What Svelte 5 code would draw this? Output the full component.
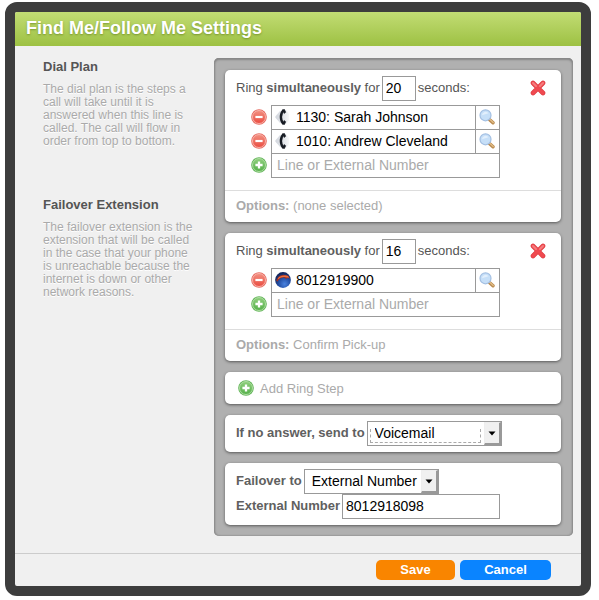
<script lang="ts">
	type Kind = 'line' | 'external';

	interface Target {
		id: number;
		kind: Kind;
		label: string;
	}

	interface Step {
		id: number;
		seconds: string;
		targets: Target[];
		draft: string;
		options: string;
	}

	let nextId = 10;

	let steps = $state<Step[]>([
		{
			id: 1,
			seconds: '20',
			targets: [
				{ id: 1, kind: 'line', label: '1130: Sarah Johnson' },
				{ id: 2, kind: 'line', label: '1010: Andrew Cleveland' }
			],
			draft: '',
			options: '(none selected)'
		},
		{
			id: 2,
			seconds: '16',
			targets: [{ id: 3, kind: 'external', label: '8012919900' }],
			draft: '',
			options: 'Confirm Pick-up'
		}
	]);

	let noAnswer = $state('Voicemail');
	let failover = $state('External Number');
	let externalNumber = $state('8012918098');

	function addTarget(step: Step) {
		if (!step.draft) return;
		step.targets.push({ id: nextId++, kind: 'external', label: step.draft });
		step.draft = '';
	}

	function removeTarget(step: Step, id: number) {
		step.targets = step.targets.filter((t) => t.id !== id);
	}

	function addStep() {
		steps.push({ id: nextId++, seconds: '20', targets: [], draft: '', options: '(none selected)' });
	}

	function removeStep(id: number) {
		steps = steps.filter((s) => s.id !== id);
	}
</script>

{#snippet badge(kind: 'add' | 'remove')}
	<svg class="icon" viewBox="0 0 16 16" aria-hidden="true">
		<defs>
			<linearGradient id="grad-add" x1="0" y1="0" x2="0" y2="1">
				<stop offset="0" stop-color="#90cf7e" />
				<stop offset="1" stop-color="#55b04a" />
			</linearGradient>
			<linearGradient id="grad-remove" x1="0" y1="0" x2="0" y2="1">
				<stop offset="0" stop-color="#f29182" />
				<stop offset="1" stop-color="#ea4b40" />
			</linearGradient>
		</defs>
		<circle cx="8" cy="8" r="7.8" fill={kind === 'add' ? '#62b558' : '#e66a60'} />
		<circle cx="8" cy="8" r="6.5" fill="url(#grad-{kind})" stroke={kind === 'add' ? '#b5e0a9' : '#f9b9b0'} stroke-width="0.9" />
		{#if kind === 'add'}
			<path d="M8 4.4v7.2M4.4 8h7.2" stroke="#fff" stroke-width="2.3" />
		{:else}
			<path d="M4.4 8h7.2" stroke="#fff" stroke-width="2.2" />
		{/if}
	</svg>
{/snippet}

{#snippet targetIcon(kind: Kind)}
	<svg class="icon" viewBox="0 0 16 16" aria-hidden="true">
		{#if kind === 'line'}
			<defs>
				<linearGradient id="grad-phone" x1="0" y1="0" x2="1" y2="0">
					<stop offset="0" stop-color="#d3d7de" />
					<stop offset="0.5" stop-color="#dfe2e7" />
					<stop offset="1" stop-color="#f6f7f8" />
				</linearGradient>
			</defs>
			<path d="M5 2L0.5 7.2q-0.4 0.800 0 1.600L5 14l6.500 0.500 2.500-3.500V5l-2.500-3.500z" fill="url(#grad-phone)" />
			<path d="M8.600 1C5 4.600 5 11.400 8.600 15" fill="none" stroke="#181c24" stroke-width="2.400" />
			<path
				d="M7.600 0.900L9.400 0.300l1.400 2.900-1.700 1.400zM7.600 15.100l1.800 0.600 1.400-2.900-1.700-1.400z"
				fill="#181c24"
				stroke="#181c24"
				stroke-width="0.500"
				stroke-linejoin="round"
			/>
		{:else}
			<defs>
				<radialGradient id="grad-globe" cx="0.6" cy="0.75" r="0.7">
					<stop offset="0" stop-color="#4a83e0" />
					<stop offset="0.55" stop-color="#234ea3" />
					<stop offset="1" stop-color="#13265c" />
				</radialGradient>
			</defs>
			<circle cx="8" cy="8" r="7.9" fill="url(#grad-globe)" />
			<path d="M1.300 8.800C2 5.500 5 3 8.500 2.800l5 0.900 1.300 3-2.600-0.900-1 1.500-1.900-1.700C6.500 5.400 4 6.500 2.600 9.600z" fill="#9c3026" />
			<path d="M3 6.300C5 3.900 8.500 3 12.800 4l1.200 1.700-3.200-0.500C8 4.700 5.500 5.200 3 7.300z" fill="#f0703c" />
		{/if}
	</svg>
{/snippet}

{#snippet arrow()}
	<span class="arrow" aria-hidden="true">
		<svg viewBox="0 0 8 5"><path d="M0.500 0.500h7L4 4.500z" fill="#000" /></svg>
	</span>
{/snippet}

<div class="dialog">
	<header>
		<h1>Find Me/Follow Me Settings</h1>
	</header>

	<div class="content">
		<aside>
			<section>
				<h2>Dial Plan</h2>
				<p>
					The dial plan is the steps a call will take until it is answered when this line is
					called. The call will flow in order from top to bottom.
				</p>
			</section>
			<section>
				<h2>Failover Extension</h2>
				<p>
					The failover extension is the extension that will be called in the case that your phone
					is unreachable because the internet is down or other network reasons.
				</p>
			</section>
		</aside>

		<main>
			{#each steps as step (step.id)}
				<div class="card step">
					<div class="row">
						<label for="seconds-{step.id}">Ring <b>simultaneously</b> for</label>
						<input id="seconds-{step.id}" class="field seconds" bind:value={step.seconds} />
						<span>seconds:</span>
						<button class="plain close" aria-label="Remove ring step" onclick={() => removeStep(step.id)}>
							<svg class="icon" viewBox="0 0 16 16" aria-hidden="true">
								<path d="M3 3l10 10M13 3L3 13" stroke="#dc3c42" stroke-width="4.6" stroke-linecap="round" />
								<path d="M3 3l10 10M13 3L3 13" stroke="#f04a50" stroke-width="3.4" stroke-linecap="round" />
								<path d="M3 3l3 3M13 3l-3 3" stroke="#f67c7e" stroke-width="2" stroke-linecap="round" />
							</svg>
						</button>
					</div>

					<ul>
						{#each step.targets as target (target.id)}
							<li>
								<button class="plain" aria-label="Remove {target.label}" onclick={() => removeTarget(step, target.id)}>
									{@render badge('remove')}
								</button>
								<div class="box">
									<span class="kind">{@render targetIcon(target.kind)}</span>
									<input aria-label="Line or number" bind:value={target.label} />
									<button class="plain search" aria-label="Find a line">
										<svg class="icon" viewBox="0 0 16 16" aria-hidden="true">
											<path d="M10.4 10.4l3.6 3.4" stroke="#b98a50" stroke-width="3.4" stroke-linecap="round" />
											<path d="M10.8 10.2l3.4 3.2" stroke="#e2bd85" stroke-width="1.4" stroke-linecap="round" />
											<circle cx="6.5" cy="6.3" r="5.5" fill="#c6dff8" stroke="#a3bfe2" stroke-width="1.2" />
											<path d="M3 6.2a3.6 3.6 0 0 1 6.500-2z" fill="#e2effc" />
										</svg>
									</button>
								</div>
							</li>
						{/each}
						<li>
							<button class="plain" aria-label="Add number" onclick={() => addTarget(step)}>
								{@render badge('add')}
							</button>
							<div class="box">
								<input
									class="draft"
									aria-label="Line or External Number"
									placeholder="Line or External Number"
									bind:value={step.draft}
								/>
							</div>
						</li>
					</ul>

					<div class="options"><b>Options:</b> {step.options}</div>
				</div>
			{/each}

			<div class="card">
				<button class="plain add-step" onclick={addStep}>
					{@render badge('add')}
					Add Ring Step
				</button>
			</div>

			<div class="card form">
				<div class="row">
					<label for="no-answer"><b>If no answer, send to</b></label>
					<span class="select dashed">
						<select id="no-answer" bind:value={noAnswer}>
							<option>Voicemail</option>
							<option>Hang Up</option>
						</select>
						{@render arrow()}
					</span>
				</div>
			</div>

			<div class="card form">
				<div class="row">
					<label for="failover"><b>Failover to</b></label>
					<span class="select">
						<select id="failover" bind:value={failover}>
							<option>External Number</option>
							<option>Voicemail</option>
						</select>
						{@render arrow()}
					</span>
				</div>
				<div class="row">
					<label for="external-number"><b>External Number</b></label>
					<input id="external-number" class="field number" bind:value={externalNumber} />
				</div>
			</div>
		</main>
	</div>

	<footer>
		<button class="save">Save</button>
		<button class="cancel">Cancel</button>
	</footer>
</div>

<style>
	:global(body) {
		background: #fff;
	}

	.dialog {
		margin: 2px 8px 4px 5px;
		border: 10px solid #3d3d3d;
		border-radius: 12px;
		background: #f0f0f0;
		color: #555;
		font-family: 'Liberation Sans', Arial, Helvetica, sans-serif;
		font-size: 13px;
	}

	header {
		padding: 0 11px;
		background: linear-gradient(180deg, #c2dc74, #9dc143);
		border-radius: 2px 2px 0 0;
	}

	h1 {
		margin: 0;
		padding-bottom: 2px;
		font-size: 18px;
		line-height: 32px;
		color: #fff;
		text-shadow: 0 1px 2px rgba(70, 100, 10, 0.5);
	}

	.content {
		display: grid;
		grid-template-columns: 171px 1fr;
		padding: 12px 8px 17px 28px;
	}

	aside section {
		min-height: 138px;
		padding-right: 18px;
	}

	h2 {
		margin: 0 0 7px;
		font-size: 13px;
		line-height: 18px;
	}

	aside p {
		margin: 0;
		font-size: 12px;
		line-height: 13px;
		color: #aaa;
		text-shadow: 0 1px 0 #fff;
	}

	main {
		display: flex;
		flex-direction: column;
		gap: 11px;
		padding: 12px 12px 11px 11px;
		border-radius: 5px;
		background: #b0b0b0;
		box-shadow:
			inset 0 2px 2px #888,
			inset 1px 0 2px #888,
			inset -1px 0 2px #888;
	}

	.card {
		border-radius: 5px;
		background: #fff;
		box-shadow: 0 1px 3px rgba(0, 0, 0, 0.5);
	}

	.step {
		padding-top: 6px;
	}

	.form {
		padding: 6px 0;
	}

	.row {
		display: flex;
		align-items: center;
		gap: 2px;
		padding: 0 11px;
	}

	.row label,
	.row > span:not(.select) {
		padding-bottom: 2px;
	}

	.row b {
		color: #606060;
	}

	.field,
	.box {
		box-sizing: border-box;
		height: 25px;
		border: 1px solid #999;
		background: #fff;
	}

	input,
	select {
		margin: 0;
		padding: 0 3px 2px;
		border: 0;
		background: none;
		color: #000;
		font: 14px 'Liberation Sans', Arial, Helvetica, sans-serif;
	}

	.seconds {
		width: 34px;
	}

	.number {
		width: 158px;
	}

	.plain {
		display: flex;
		align-items: center;
		padding: 0;
		border: 0;
		background: none;
		font: inherit;
		cursor: pointer;
	}

	.icon {
		display: block;
		flex: none;
		width: 16px;
		height: 16px;
	}

	.close {
		margin-left: auto;
		margin-right: 4px;
		padding-bottom: 2px;
	}

	ul {
		margin: 4px 0 12px;
		padding: 0 11px 0 15px;
		list-style: none;
	}

	li {
		display: flex;
		align-items: center;
		gap: 4px;
		padding-left: 11px;
	}

	li + li {
		margin-top: -1px;
	}

	li .plain,
	.kind {
		padding-bottom: 1px;
	}

	.box {
		display: flex;
		width: 229px;
	}

	.box input {
		flex: 1;
		min-width: 0;
	}

	.box .draft {
		padding: 0 5px 2px;
	}

	.draft::placeholder {
		color: #aaa;
		opacity: 1;
	}

	.kind {
		display: flex;
		align-items: center;
		padding-left: 3px;
		padding-right: 2px;
	}

	.search {
		padding-left: 3px;
		padding-right: 4px;
		border-left: 1px solid #999;
	}

	.options {
		padding: 0 11px 2px;
		border-top: 1px solid #ddd;
		line-height: 29px;
		color: #aaa;
	}

	.add-step {
		gap: 6px;
		width: 100%;
		height: 32px;
		padding: 0 13px;
		color: #aaa;
	}

	.select {
		position: relative;
		box-sizing: border-box;
		width: 135px;
		height: 25px;
		border: 1px solid #999;
	}

	.select select {
		display: block;
		width: 100%;
		height: 100%;
		padding: 0 20px 2px 7px;
		appearance: none;
	}

	.dashed::before {
		content: '';
		position: absolute;
		inset: 7px 20px 2px 2px;
		border: 1px dashed #aaa;
		border-top: 0;
		pointer-events: none;
	}

	.arrow {
		position: absolute;
		inset: 0 0 0 auto;
		display: flex;
		align-items: center;
		justify-content: center;
		box-sizing: border-box;
		width: 17px;
		border: 1px solid #eee;
		border-right: 2px solid #999;
		border-bottom: 2px solid #999;
		background: #f0f0f0;
		pointer-events: none;
	}

	.arrow svg {
		width: 8px;
		height: 5px;
	}

	footer {
		display: flex;
		justify-content: flex-end;
		gap: 5px;
		padding: 6px 30px;
		border-top: 1px solid #ccc;
	}

	footer button {
		height: 20px;
		padding: 0 0 2px;
		border: 0;
		border-radius: 5px;
		color: #fff;
		font: bold 13px 'Liberation Sans', Arial, Helvetica, sans-serif;
		cursor: pointer;
	}

	.save {
		width: 79px;
		background: #f98500;
	}

	.cancel {
		width: 91px;
		background: #0a84ff;
	}
</style>
